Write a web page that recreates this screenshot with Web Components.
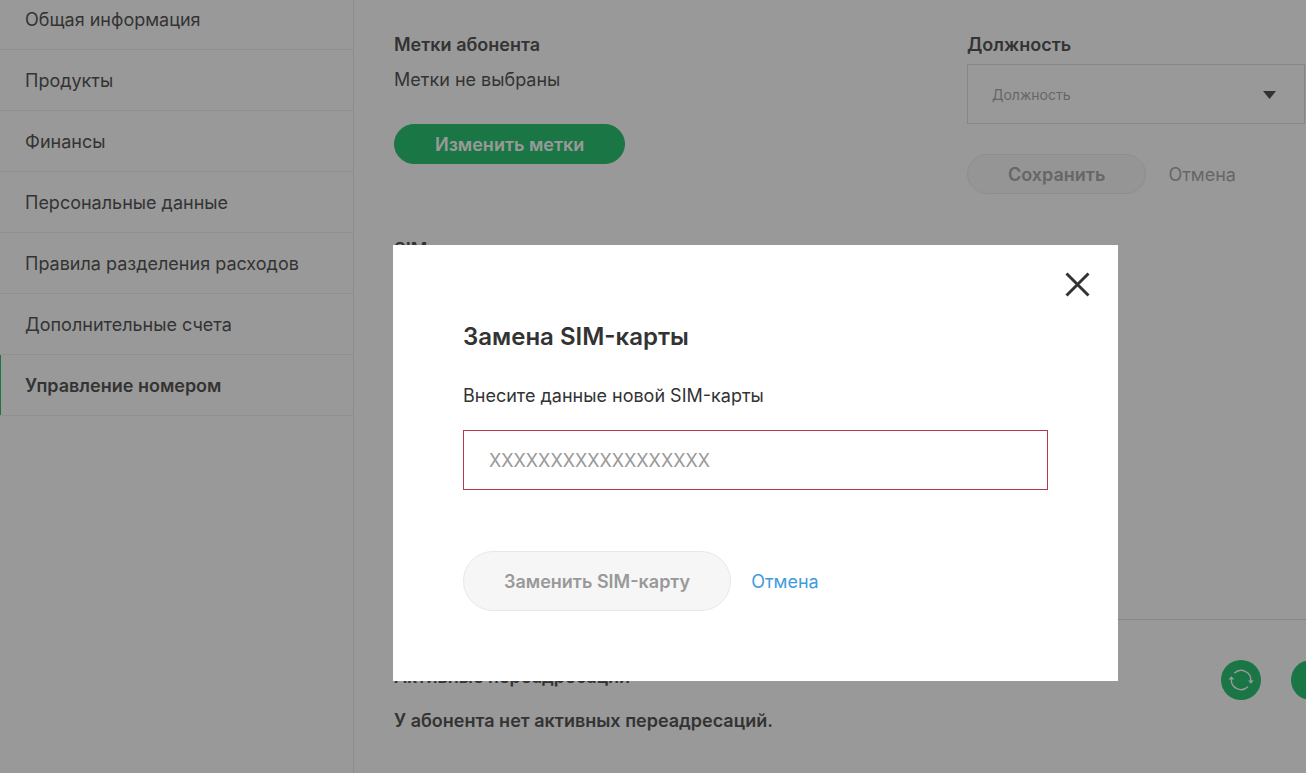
<!DOCTYPE html>
<html lang="ru">
<head>
<meta charset="utf-8">
<title>Управление номером</title>
<style>
  body {
    margin: 0;
    height: 100vh;
    overflow: hidden;
    background: #fff;
    color: #333;
    font: 400 18px/30px Inter, "Open Sans", sans-serif;
  }
</style>
</head>
<body>
<account-page></account-page>

<script>
const define = (name, html, setup) => {
  const template = document.createElement('template');
  template.innerHTML = html;
  customElements.define(name, class extends HTMLElement {
    constructor() {
      super();
      this.attachShadow({ mode: 'open' }).append(template.content.cloneNode(true));
    }
    connectedCallback() {
      if (setup) setup(this, this.shadowRoot);
    }
  });
};

define('nav-item', `
  <style>
    :host { display: block; border-bottom: 1px solid #ededed; }
    a { display: block; padding: 16px 24px 14px; border-left: 1px solid transparent; color: inherit; text-decoration: none; }
    :host([active]) a { border-color: #00b956; font-weight: 600; }
  </style>
  <a href="#"><slot></slot></a>`);

define('side-menu', `
  <style>
    :host { display: block; flex: none; width: 353px; border-right: 1px solid #e4e4e4; overflow: hidden; }
    nav { margin-top: -11px; }
  </style>
  <nav aria-label="Разделы"><slot></slot></nav>`);

define('pill-button', `
  <style>
    :host { display: inline-block; }
    button {
      display: block; height: 40px; padding: 2px 40px 0; border: 1px solid #00b956; border-radius: 30px;
      background: #00b956; color: #fff; font: inherit; font-weight: 600; white-space: nowrap; cursor: pointer;
    }
    button:disabled { background: #f6f6f6; border-color: #e8e8e8; color: #999; cursor: default; }
    :host([large]) button { height: 60px; }
  </style>
  <button type="button"><slot></slot></button>`,
  (host, root) => { root.querySelector('button').disabled = host.hasAttribute('disabled'); });

define('text-link', `
  <style>
    :host { display: inline-block; padding-top: 2px; color: #3f9be0; }
    :host([muted]) { color: #999; }
    a { color: inherit; text-decoration: none; }
  </style>
  <a href="#"><slot></slot></a>`);

define('round-button', `
  <style>
    :host { display: block; flex: none; }
    button { display: grid; place-items: center; width: 40px; height: 40px; padding: 0; border: 0; border-radius: 50%; background: #00b956; cursor: pointer; }
  </style>
  <button type="button"><slot></slot></button>`,
  (host, root) => { root.querySelector('button').setAttribute('aria-label', host.getAttribute('label')); });

define('position-field', `
  <style>
    :host { display: block; }
    label { display: block; font-weight: 600; }
    .box { position: relative; margin-top: 4px; }
    select {
      appearance: none; display: block; box-sizing: border-box; width: 100%; height: 60px; padding: 2px 60px 0 24px;
      border: 1px solid #d8d8d8; border-radius: 0; background: #fff; color: #999; font: inherit; font-size: 14px;
    }
    svg { position: absolute; right: 29px; top: 27px; pointer-events: none; }
    .actions { display: flex; align-items: center; gap: 22px; margin-top: 30px; }
  </style>
  <label for="position">Должность</label>
  <div class="box">
    <select id="position"><option>Должность</option></select>
    <svg width="13" height="8" viewBox="0 0 13 8" aria-hidden="true"><path d="M0 0h13L6.5 8z" fill="#333"/></svg>
  </div>
  <div class="actions">
    <pill-button disabled>Сохранить</pill-button>
    <text-link muted>Отмена</text-link>
  </div>`);

define('subscriber-panel', `
  <style>
    :host { display: block; flex: 1; min-width: 0; padding: 30px 0 0 40px; overflow: hidden; }
    .top { display: grid; grid-template-columns: minmax(0, 1fr) 338px; padding-right: 1px; }
    h2, p { margin: 0; font-size: inherit; }
    h2, .strong { font-weight: 600; }
    .top p { margin: 5px 0 29px; }
    .sim { min-height: 384px; margin-top: 41px; border-bottom: 1px solid #d8d8d8; }
    .forward { display: flex; align-items: flex-start; justify-content: space-between; gap: 30px; margin: 40px -25px 6px 0; }
    .forward h2 { line-height: 34px; }
    .icons { display: flex; gap: 30px; }
    svg { display: block; }
  </style>
  <section class="top">
    <div>
      <h2>Метки абонента</h2>
      <p>Метки не выбраны</p>
      <pill-button>Изменить метки</pill-button>
    </div>
    <position-field></position-field>
  </section>
  <section class="sim"><h2>SIM</h2></section>
  <section>
    <div class="forward">
      <h2>Активные переадресации</h2>
      <div class="icons">
        <round-button label="Обновить">
          <svg width="40" height="40" viewBox="0 0 40 40" fill="none" stroke="#fff" stroke-width="1.3" aria-hidden="true">
            <path d="M13.3 13.3A9.6 9.6 0 0 1 29.7 21M26.8 26.7A9.6 9.6 0 0 1 10.4 19"/>
            <path d="M27.6 20.8h4.6l-2.3 2.6zM8.1 19.2h4.6l-2.3-2.6z" fill="#fff" stroke-width=".6"/>
          </svg>
        </round-button>
        <round-button label="Добавить">
          <svg width="10" height="10" viewBox="0 0 10 10" stroke="#fff" aria-hidden="true"><path d="M5 0v10M0 5h10"/></svg>
        </round-button>
      </div>
    </div>
    <p class="strong">У абонента нет активных переадресаций.</p>
  </section>`);

define('modal-dialog', `
  <style>
    :host {
      position: fixed; inset: 0; box-sizing: border-box; padding: 153px 0 0 205px;
      display: flex; align-items: center; justify-content: center; background: rgba(51, 51, 51, .5);
    }
    .window { position: relative; box-sizing: border-box; width: 100%; max-width: 725px; padding: 70px; background: #fff; }
    h1 { margin: 0 0 22px; font-size: 24px; line-height: 44px; font-weight: 600; }
    .close { position: absolute; top: 27px; right: 28px; padding: 0; border: 0; background: none; cursor: pointer; }
    svg { display: block; }
  </style>
  <div class="window" role="dialog" aria-modal="true" aria-labelledby="title">
    <button class="close" type="button" aria-label="Закрыть">
      <svg width="25" height="25" viewBox="0 0 25 25" stroke="#333" stroke-width="3" aria-hidden="true"><path d="M1.5 1.5l22 22M23.5 1.5l-22 22"/></svg>
    </button>
    <h1 id="title"><slot name="title"></slot></h1>
    <slot></slot>
  </div>`);

define('sim-form', `
  <style>
    :host { display: block; }
    label { display: block; }
    input {
      display: block; box-sizing: border-box; width: 100%; height: 60px; margin-top: 19px; padding: 0 25px;
      border: 1px solid #b8394d; border-radius: 0; background: #fff; color: #333; font: inherit;
    }
    input::placeholder { color: #999; opacity: 1; }
    .actions { display: flex; align-items: center; gap: 20px; margin-top: 61px; }
  </style>
  <form>
    <label for="sim">Внесите данные новой SIM-карты</label>
    <input id="sim" type="text" placeholder="XXXXXXXXXXXXXXXXXX">
    <div class="actions">
      <pill-button large disabled>Заменить SIM-карту</pill-button>
      <text-link>Отмена</text-link>
    </div>
  </form>`);

define('account-page', `
  <style>
    :host { display: flex; height: 100%; }
  </style>
  <side-menu>
    <nav-item>Общая информация</nav-item>
    <nav-item>Продукты</nav-item>
    <nav-item>Финансы</nav-item>
    <nav-item>Персональные данные</nav-item>
    <nav-item>Правила разделения расходов</nav-item>
    <nav-item>Дополнительные счета</nav-item>
    <nav-item active>Управление номером</nav-item>
  </side-menu>
  <subscriber-panel></subscriber-panel>
  <modal-dialog>
    <span slot="title">Замена SIM-карты</span>
    <sim-form></sim-form>
  </modal-dialog>`);
</script>
</body>
</html>
